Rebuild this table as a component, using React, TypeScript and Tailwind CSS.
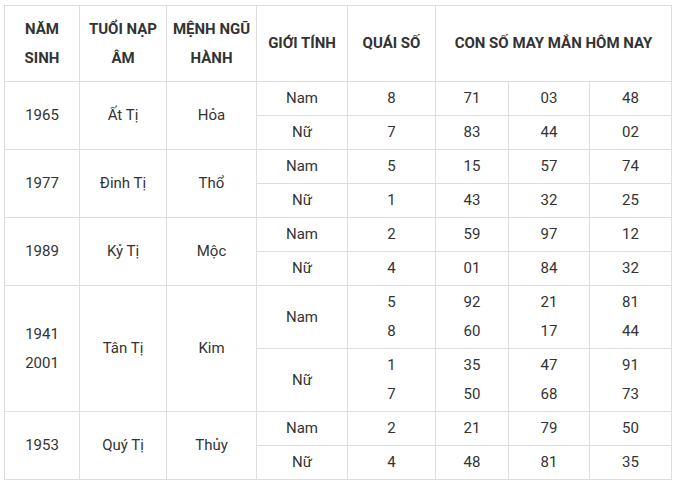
const ROWS = [
  {
    year: ['1965'],
    tuoi: 'Ất Tị',
    menh: 'Hỏa',
    sub: [
      { gt: 'Nam', qs: ['8'], nums: [['71'], ['03'], ['48']] },
      { gt: 'Nữ', qs: ['7'], nums: [['83'], ['44'], ['02']] },
    ],
  },
  {
    year: ['1977'],
    tuoi: 'Đinh Tị',
    menh: 'Thổ',
    sub: [
      { gt: 'Nam', qs: ['5'], nums: [['15'], ['57'], ['74']] },
      { gt: 'Nữ', qs: ['1'], nums: [['43'], ['32'], ['25']] },
    ],
  },
  {
    year: ['1989'],
    tuoi: 'Kỷ Tị',
    menh: 'Mộc',
    sub: [
      { gt: 'Nam', qs: ['2'], nums: [['59'], ['97'], ['12']] },
      { gt: 'Nữ', qs: ['4'], nums: [['01'], ['84'], ['32']] },
    ],
  },
  {
    year: ['1941', '2001'],
    tuoi: 'Tân Tị',
    menh: 'Kim',
    sub: [
      { gt: 'Nam', qs: ['5', '8'], nums: [['92', '60'], ['21', '17'], ['81', '44']] },
      { gt: 'Nữ', qs: ['1', '7'], nums: [['35', '50'], ['47', '68'], ['91', '73']] },
    ],
  },
  {
    year: ['1953'],
    tuoi: 'Quý Tị',
    menh: 'Thủy',
    sub: [
      { gt: 'Nam', qs: ['2'], nums: [['21'], ['79'], ['50']] },
      { gt: 'Nữ', qs: ['4'], nums: [['48'], ['81'], ['35']] },
    ],
  },
]

const WIDTHS = [75, 87, 90, 91, 88, 73, 81, 82]

function Lines({ items }: { items: string[] }) {
  return (
    <>
      {items.map((t, i) => (
        <div key={i} className="leading-[29px]">
          {t}
        </div>
      ))}
    </>
  )
}

const cell = 'border border-[#dddddd] text-center align-middle p-0'

export default function App() {
  return (
    <div className="bg-white w-[676px] h-[484px] pt-[5px] pl-[4px] font-['Roboto',sans-serif] text-[15px] text-[#333333]">
      <table className="table-fixed border-collapse w-[667px]">
        <colgroup>
          {WIDTHS.map((w, i) => (
            <col key={i} style={{ width: w }} />
          ))}
        </colgroup>
        <thead>
          <tr className="h-[76px] font-bold">
            <th className={cell}>
              <Lines items={['NĂM', 'SINH']} />
            </th>
            <th className={cell}>
              <Lines items={['TUỔI NẠP', 'ÂM']} />
            </th>
            <th className={cell}>
              <Lines items={['MỆNH NGŨ', 'HÀNH']} />
            </th>
            <th className={cell}>GIỚI TÍNH</th>
            <th className={cell}>QUÁI SỐ</th>
            <th className={cell} colSpan={3}>
              CON SỐ MAY MẮN HÔM NAY
            </th>
          </tr>
        </thead>
        <tbody>
          {ROWS.map(r =>
            r.sub.map((s, j) => (
              <tr key={r.tuoi + j} className={s.qs.length > 1 ? 'h-[63px]' : 'h-[34px]'}>
                {j === 0 && (
                  <>
                    <td className={cell} rowSpan={2}>
                      <Lines items={r.year} />
                    </td>
                    <td className={cell} rowSpan={2}>
                      {r.tuoi}
                    </td>
                    <td className={cell} rowSpan={2}>
                      {r.menh}
                    </td>
                  </>
                )}
                <td className={cell}>{s.gt}</td>
                <td className={cell}>
                  <Lines items={s.qs} />
                </td>
                {s.nums.map((n, k) => (
                  <td key={k} className={cell}>
                    <Lines items={n} />
                  </td>
                ))}
              </tr>
            )),
          )}
        </tbody>
      </table>
    </div>
  )
}
